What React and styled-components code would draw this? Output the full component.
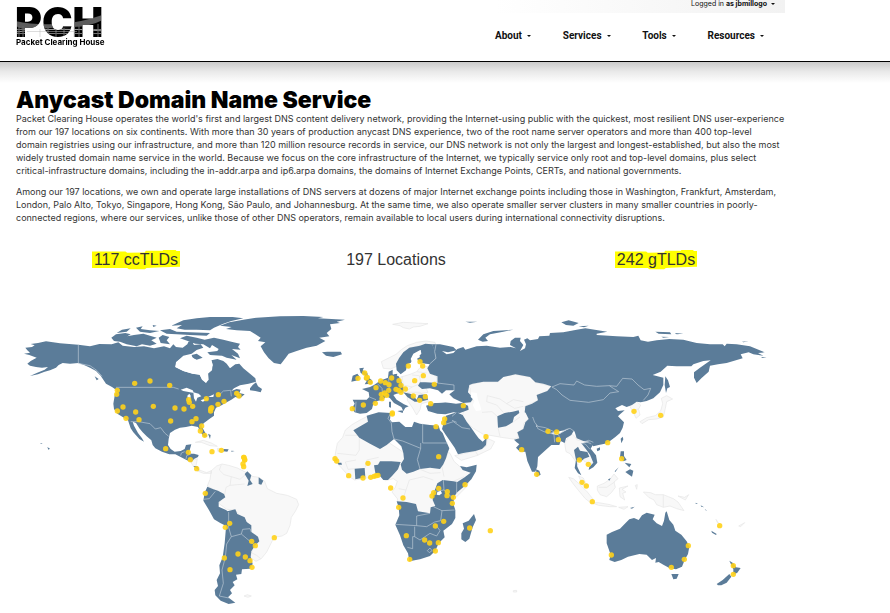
import React from "react";
import styled, { createGlobalStyle } from "styled-components";

const GlobalStyle = createGlobalStyle`
  * { box-sizing: border-box; }
  body {
    margin: 0;
    background: #fff;
    color: #333;
    font-family: "Liberation Sans", Arial, sans-serif;
    overflow-x: hidden;
  }
`;

const Header = styled.header`
  border-bottom: 1px solid #000;
`;

const HeaderInner = styled.div`
  display: flex;
  justify-content: space-between;
  max-width: 785px;
  height: 61px;
  padding-left: 15px;
`;

const LogoLink = styled.a`
  display: block;
  svg { display: block; background: #fff; isolation: isolate; }
`;

const Etching = styled.g`
  mix-blend-mode: lighten;
`;

const HeaderSide = styled.div`
  display: flex;
  flex-direction: column;
  width: 290px;
`;

const AccountBar = styled.div`
  display: flex;
  justify-content: flex-end;
  height: 13px;
  padding-right: 10px;
  background: linear-gradient(to right, #fff, #f2f2f2);
`;

const MenuButton = styled.button`
  display: flex;
  align-items: center;
  gap: ${(p) => (p.$small ? 4 : 5)}px;
  height: ${(p) => (p.$small ? 8 : 16)}px;
  padding: 0;
  border: 0;
  background: none;
  color: #111;
  font-family: ${(p) => (p.$small ? "Inter" : "Roboto")}, "Liberation Sans", sans-serif;
  font-size: ${(p) => (p.$small ? 7 : 10)}px;
  line-height: ${(p) => (p.$small ? 8 : 16)}px;
  font-weight: ${(p) => (p.$small ? 400 : 700)};
  white-space: nowrap;
  cursor: pointer;
`;

const Caret = styled.span`
  border: 2px solid transparent;
  border-top-color: #111;
  border-bottom: 0;
`;

const Nav = styled.nav`
  display: flex;
  justify-content: space-between;
  padding: 15px 21px 0 0;
`;

const Shade = styled.div`
  height: 21px;
  background: linear-gradient(#cacaca, #e9e9e9 45%, #fff);
`;

const Main = styled.main`
  max-width: 786px;
  padding: 6px 0 0 6px;
`;

const Copy = styled.section`
  padding-left: 10px;
`;

const Title = styled.h1`
  margin: 0;
  color: #000;
  font-family: Inter, "Liberation Sans", sans-serif;
  font-size: 23px;
  font-weight: 900;
  line-height: 23px;
`;

const Paragraph = styled.p`
  margin: 0 0 8px;
  font-family: Inter, "Liberation Sans", sans-serif;
  font-size: 9px;
  line-height: 13px;
`;

const Line = styled.span`
  display: block;
`;

const Stats = styled.section`
  display: grid;
  grid-template-columns: repeat(3, 1fr);
  padding-top: 18px;
`;

const Stat = styled.div`
  display: flex;
  justify-content: center;
  font-size: 16px;
  line-height: 20px;
`;

const Marked = styled.mark`
  padding: 0 2px;
  color: #333;
  background: ${(p) => (p.$on ? "#ff0" : "none")};
  clip-path: ${(p) =>
    p.$on
      ? "polygon(0 8%, 38% 8%, 40% 14%, 60% 12%, 61% 4%, 80% 4%, 81% 0, 95% 0, 96% 5%, 100% 5%, 100% 84%, 80% 86%, 62% 90%, 60% 96%, 42% 96%, 40% 90%, 0 90%)"
      : "none"};
`;

const MapFigure = styled.figure`
  margin: 0;
  padding-top: 35px;
  svg { display: block; width: 100%; height: auto; }
`;

const zones = [
  {
    x: 0, y: 0,
    pale: "M556,412 L580,406 604,414 622,424 600,422 574,412Z M622,430 L640,432 640,440 624,440Z",
    land:
      "M42,146 L60,143 52,136 46,128 66,126 74,121 62,117 84,114 108,109 150,115 205,119 240,124 268,117 305,118 325,112 338,122 372,126 402,124 432,130 462,124 480,130 490,118 498,126 518,128 532,118 540,100 552,120 572,118 580,128 560,135 545,146 520,152 498,172 496,186 520,198 548,206 568,208 576,224 588,234 594,222 592,208 606,196 608,178 604,166 622,162 640,168 650,176 660,190 676,178 688,176 700,190 720,206 736,220 738,230 716,236 690,241 672,250 664,258 680,252 692,254 688,264 704,268 690,280 676,276 664,284 646,294 632,302 618,308 612,322 612,332 598,342 582,354 574,362 584,380 592,394 582,396 572,382 564,366 545,362 528,366 510,368 495,374 480,384 476,402 474,420 482,432 494,440 512,438 524,432 528,420 544,418 540,432 536,446 552,446 566,450 564,456 552,462 544,472 528,464 512,456 496,448 478,448 456,440 436,430 428,420 424,406 410,394 398,382 388,370 378,354 368,350 372,362 384,384 396,400 402,410 388,402 370,382 362,370 354,346 338,336 322,326 312,312 310,296 314,272 320,256 306,246 288,236 272,212 258,198 240,188 222,180 205,174 180,176 158,174 146,180 138,188 120,196 104,200 84,208 60,213 80,204 104,194 114,186 96,188 78,186 60,182 52,176 62,168 80,158 58,150Z" +
      "M304,98 L318,88 346,84 362,88 352,94 372,90 400,86 420,92 440,98 424,106 440,116 420,122 396,118 380,124 350,118 330,110 312,108Z M320,84 L336,74 362,70 350,80Z M378,68 L398,64 392,72 420,76 448,78 420,84 390,80Z M428,60 L440,62 430,66Z M450,76 L480,72 500,80 540,82 600,84 590,92 540,90 500,88 470,86Z M446,98 L458,90 478,96 470,106 480,118 452,114Z" +
      "M484,62 L520,46 560,40 600,36 668,36 700,40 664,48 640,56 612,68 600,76 560,74 524,74 500,70 516,60Z M510,100 L530,92 560,98 584,104 612,98 640,104 664,110 690,116 684,126 692,134 666,132 684,146 690,160 664,150 680,164 650,158 636,152 600,150 592,142 622,138 626,132 606,120 600,130 580,118 556,116 540,110Z M545,150 L560,146 578,158 560,164 548,160Z" +
      "M720,250 L728,240 738,232 744,244 756,252 752,262 736,258 720,256Z M630,114 L632,102 M630,62 L658,52 700,44 740,38 810,34 880,33 940,36 924,40 1005,44 980,50 990,54 960,58 964,72 950,84 958,94 928,98 946,108 920,122 890,128 860,138 836,146 826,160 812,178 792,174 776,160 762,142 752,124 766,112 744,108 752,98 736,88 720,78 680,76 648,72 665,66Z M936,142 L952,140 992,140 996,148 970,156 948,152Z" +
      "M92,414 L98,417 92,417Z M112,426 L120,431 115,434Z M254,214 L266,222 260,226Z M640,432 L656,433 652,440 640,439Z M664,437 L674,438 664,440Z M594,386 L602,390 600,402Z",
    lines: "M205,119V175L240,182 260,196 276,214 M318,247H490L506,252 M362,350H386L420,356 436,372 452,368 464,384 476,394 M512,452 L514,444 524,440 M528,462 L530,452 544,446 M626,272 L640,258 662,256 664,274",
    water: "M500,170 L520,156 540,152 560,166 580,166 604,166 608,182 594,202 596,224 588,233 576,222 570,210 548,206 520,198 496,186Z M512,254 L530,248 548,256 552,264 540,262 520,258Z M538,266 L542,272 540,290 534,286 532,272Z M550,262 L566,266 574,274 562,278 558,290 552,280Z M572,286 L592,278 594,284 578,290Z M594,276 L612,268 610,276Z",
    dots: [[374,235],[420,228],[479,241],[322,256],[320,268],[339,306],[322,318],[348,340],[387,344],[377,321],[430,304],[495,309],[522,312],[548,304],[536,284],[538,292],[482,348],[589,281],[625,269],[680,265],[687,273],[642,289],[624,298],[605,308],[602,311],[602,318],[558,341],[546,350],[575,363],[571,378],[584,391],[467,431],[535,442],[541,464],[606,440],[634,436],[701,457],[704,464]],
  },
  {
    x: 420, y: 405,
    pale: "M184,92 L200,78 216,72 236,76 262,84 286,96 300,108 326,112 344,124 352,146 380,160 412,166 440,178 446,194 436,214 424,232 420,256 410,280 396,288 372,292 362,312 350,336 334,356 318,364 300,352 306,334 312,318 300,270 280,240 256,210 230,208 206,190 220,170 204,156 190,148 172,138 180,118Z M120,64 L142,56 138,78 148,90 170,98 184,92 184,100 160,100 140,92Z M282,468 L292,464 304,468 294,472Z",
    paleLines: "M214,74 L208,90 222,104 244,110 240,136 228,142 224,164 M244,110 L270,118 286,104 M240,136 L262,134 284,132 M304,338 L320,346 332,356",
    land: "M164,158 L172,140 190,148 204,152 222,162 226,172 206,186 206,200 228,210 236,216 240,248 236,262 212,250 192,238 178,212 160,182Z M232,214 L256,208 262,222 284,232 290,246 304,256 304,276 324,290 328,304 314,318 304,334 302,350 308,372 300,386 276,388 274,402 258,404 262,418 248,426 254,436 240,450 246,460 234,472 256,488 236,492 212,482 196,466 194,450 204,438 200,420 210,400 208,376 218,352 224,310 228,262Z M284,102 L292,94 304,106 300,120 308,132 292,138 296,122Z M326,112 L340,122 334,134 326,132Z M130,78 L142,78 148,92Z",
    lines: "M236,216 L236,262 244,290 230,312 226,352 216,390 220,430 208,468 236,474 M244,290 L274,282 300,304 316,318 M274,282 L278,268 300,266 304,276 M160,178 L178,176 196,154",
    dots: [[140,86],[166,160],[282,52],[284,60],[279,72],[281,80],[239,250],[226,262],[305,304],[316,317],[373,293],[264,342],[286,351],[300,362],[306,382],[223,354],[240,389]],
  },
  {
    x: 930, y: 0,
    pale: "M218,58 L250,52 290,54 324,56 300,64 280,66 268,72 250,68 240,62Z M184,170 L208,158 228,148 244,134 262,122 290,112 318,108 345,112 348,120 300,122 270,128 250,144 236,162 230,184 212,192 190,190Z M236,218 L270,208 290,200 300,188 322,184 330,206 350,214 354,228 334,234 310,232 324,262 276,270 240,250Z M262,262 L300,262 320,280 326,290 304,296 300,314 290,330 276,306 262,286Z M404,452 L466,438 498,424 502,400 524,410 512,432 470,452 424,466Z",
    paleLines: "M246,214 L250,240 276,246 296,238 M276,210 L298,212 302,232 M290,200 L320,204 M276,246 L262,256 M466,438 L474,452",
    land: "M230,196 L228,176 238,158 250,142 268,128 300,122 302,134 280,146 272,162 276,172 262,178 258,196 242,208Z M300,122 L316,116 336,118 346,140 348,160 330,178 300,174 290,160 304,146Z M118,190 L132,188 128,196 142,204 144,216 156,226 156,236 134,238 140,228 132,222 136,212 122,204Z M98,212 L112,206 118,214 114,226 94,230Z" +
      "M98,284 L140,284 148,276 146,262 126,252 150,246 162,240 176,230 188,224 204,218 206,200 218,194 218,208 236,214 244,230 250,246 250,262 230,266 220,270 230,284 252,298 266,304 256,308 250,318 244,306 222,294 210,280 200,274 188,284 172,288 160,296 156,312 140,324 120,326 104,322 96,310 104,296Z M232,318 L250,316 248,324Z M207,290 L213,290 213,308 207,306Z M222,208 L232,206 230,214 222,212Z M250,262 L276,268 290,284 296,270 320,268 324,284 300,290 284,290 262,276Z" +
      "M318,302 L344,294 376,292 408,296 426,294 444,302 446,314 420,324 400,322 376,328 352,326 324,318Z M378,332 L410,322 428,330 440,350 452,366 466,386 476,400 488,410 500,398 498,420 486,432 466,438 430,444 414,448 404,428 390,408 376,388 366,372 372,350Z" +
      "M100,376 L144,350 140,332 176,322 212,324 210,344 216,352 238,350 256,366 276,366 282,350 300,356 330,360 356,362 360,376 368,384 378,408 388,430 382,446 378,460 370,478 360,492 330,488 300,492 280,500 260,506 246,494 242,478 252,462 250,444 244,424 222,402 200,420 180,432 150,416 118,398Z",
    lines: "M212,324 L204,340 214,354 216,380 222,402 M308,356V414H382 M302,430 L248,408 222,402 M302,414V430L292,464 300,492 M148,276 L168,284 M108,290 L106,320 M172,236 L186,250 188,270 M206,218 L208,256 M376,358 L400,350 426,368 450,372 M396,334 L408,324 M410,352 L396,346",
    water: "M276,166 L296,146 300,156 290,162 292,172 318,178 296,184 286,198 266,204 262,194 270,180Z M328,276 L340,268 356,276 384,282 408,292 376,292 344,294 330,290Z",
    dots: [[114,220],[134,204],[142,217],[139,219],[151,232],[168,248],[182,228],[196,233],[207,239],[215,219],[237,227],[243,241],[256,252],[228,253],[236,256],[243,262],[206,256],[194,264],[200,271],[184,268],[186,281],[166,295],[130,300],[97,311],[217,324],[217,327],[280,273],[299,286],[316,275],[332,296],[284,227],[310,212],[343,238],[300,170],[308,183],[265,183],[430,302],[374,342],[371,353],[348,365],[498,395]],
  },
  {
    x: 930, y: 375,
    pale: "M144,-42 L120,-30 96,-16 76,0 68,22 52,40 48,60 44,84 52,100 70,120 88,140 104,150 128,146 160,140 180,138 196,152 220,146 232,154 226,172 216,186 232,206 234,222 240,240 300,260 400,240 400,210 440,170 462,120 422,112 402,94 390,70 376,60 280,90 240,60 180,20Z",
    paleLines: "M76,16H118V60L108,76 52,70 M118,20 L180,56 M104,116 L84,118 76,96 108,90 M136,112 L140,90 176,82 M250,204 L258,180 236,176 M258,180 L268,150 310,140 340,150 M300,118 L330,130 362,128 M384,70 L366,110 372,140 M400,154 L432,140",
    land: "M104,116 L134,114 136,142 106,148Z M162,106 L174,104 180,94 214,94 242,96 234,118 216,138 204,150 190,150 178,136 168,140Z M52,98 L64,98 66,104 56,104Z M420,108 L440,112 470,104 468,124 454,148 434,168 410,188 402,202 400,222 406,240 406,264 396,282 370,302 374,322 356,340 346,362 330,378 300,388 268,394 264,370 250,346 240,316 226,284 238,256 236,232 230,214 260,216 288,222 294,244 330,250 332,232 346,228 338,210 340,190 346,176 352,160 368,150 400,154 412,156 434,142 452,128 428,120Z M462,252 L468,270 458,292 448,326 436,336 424,328 424,310 432,296 428,280 446,272Z",
    lines: "M226,283 L290,287 320,290 M284,290V320H278V356L262,352 M290,287V258L330,250 M320,290 L344,276 362,272 366,242 404,240 M284,320 L300,330 330,310 350,318 360,302 344,280 M366,242 L340,230 M370,150 L372,180 400,206 M410,156V190 M322,362 L330,354 336,362 328,368Z M372,180 L344,184",
    water: "M352,186 L362,182 366,190 358,196 350,194Z",
    dots: [[45,86],[50,93],[144,100],[86,137],[129,144],[152,142],[162,139],[168,137],[174,136],[212,174],[249,204],[236,232],[356,80],[356,175],[341,188],[336,198],[382,185],[381,197],[400,202],[397,220],[435,164],[371,274],[346,288],[449,294],[511,302],[259,317],[314,330],[329,339],[355,338],[346,363],[269,388]],
  },
  {
    x: 1380, y: 0,
    pale: "M-6,240 L40,230 84,230 100,214 136,208 180,216 196,232 244,244 230,260 200,270 204,286 164,304 168,320 176,340 162,354 160,372 142,382 146,398 130,402 100,398 66,392 40,388 10,370 -10,352 -22,334 -20,316 -30,300 0,290 12,284 0,268 0,250Z M284,414 L304,384 316,396 320,404 340,408 356,424 368,440 376,460 366,476 344,470 330,450 320,456 324,480 312,462 300,446 288,440Z M510,350 L530,338 556,332 572,318 578,296 574,280 590,272 608,282 590,290 586,310 580,336 560,342 536,344 516,356Z M478,302 L500,290 512,300 506,312 510,330 498,340 490,322Z",
    paleLines: "M50,290 L52,272 90,282 110,296 134,310 160,304 M50,290 L80,300 100,322 M110,296 L130,284 160,290 M82,334 L66,320 36,322 M84,368 L90,394 M128,352 L150,336 M488,316 L506,312",
    land: "M-114,118 L-90,118 -50,126 -40,136 -66,142 -84,138 -70,148 -50,144 -38,132 -20,126 -14,134 20,124 50,122 90,128 122,126 138,130 120,120 122,108 135,98 152,98 150,108 160,120 150,138 165,130 168,118 162,104 172,100 180,106 204,102 208,94 238,92 240,84 280,82 320,74 346,70 412,80 380,86 380,90 440,94 490,96 505,92 512,106 534,110 560,106 598,102 640,104 680,114 720,118 758,118 764,124 770,116 800,118 840,124 884,142 864,144 880,152 850,148 836,142 812,148 818,160 770,174 744,178 720,182 716,200 694,220 680,234 672,218 672,202 690,188 722,166 700,168 670,178 664,184 620,184 592,182 572,200 548,210 580,218 580,240 570,262 550,280 530,288 512,292 500,290 486,300 470,306 456,300 436,310 444,318 464,316 450,328 444,334 462,352 458,368 450,384 436,396 420,408 404,416 386,420 370,424 358,410 340,408 320,400 314,380 300,370 284,376 240,384 206,370 192,352 188,336 164,322 166,304 186,296 204,286 200,270 232,258 244,244 220,236 196,232 180,216 136,208 100,216 84,230 40,230 8,236 -2,240 -6,262 10,280 2,292 -20,294 -50,280 -62,268 -46,256 -72,256 -84,266 -96,256 -120,250 -144,252 -156,242 -150,232 -134,232 -98,234 -98,214 -120,206 -128,190 -120,176 -102,160 -106,140Z" +
      "M166,322 L188,336 200,366 250,388 262,390 280,380 300,370 312,376 304,390 288,400 284,414 272,408 268,420 244,420 228,434 204,456 202,484 196,500 186,500 172,468 166,440 150,440 138,428 148,418 140,412 132,404 148,400 142,382 160,372 166,352 176,342Z M82,334 L104,324 128,320 146,316 148,324 132,336 128,352 108,364 84,368Z" +
      "M586,214 L594,226 600,246 592,250 588,264 584,240Z M24,104 L40,88 70,78 130,74 100,80 60,88 46,98 54,108 38,110Z M274,52 L296,46 326,54 310,62 288,60Z M326,64 L356,62 342,67Z M556,80 L600,82 604,88 566,86Z M614,84 L640,86 620,88Z M574,95 L598,96 580,98Z M816,110 L836,109 820,112Z M874,156 L890,158 876,159Z M-14,50 L22,50 0,53Z",
    lines: "M246,246 L270,236 312,240 320,228 344,240 380,244 418,242 430,250 446,260 420,264 400,284 356,292 300,286 276,270 260,254Z M418,242 L440,244 458,220 486,222 504,240 522,254 542,250 534,270 520,286 M188,336 L194,352 204,364 226,368 252,380 252,388 222,380 202,370 M252,384 L270,386 286,374 300,370 314,380 M252,390 L254,412 M266,390 L272,408 M-102,118 L-106,140 -102,160 -120,176 M-98,214 L-98,234 -48,240 -48,256 M344,410 L356,406 370,412",
    water: "M4,262 L20,264 24,284 30,300 34,316 18,318 8,300 14,288 2,276Z",
    dots: [[234,379],[260,381],[265,404],[155,434],[413,413],[492,319],[572,331],[455,461],[328,465],[355,478]],
  },
  {
    x: 1470, y: 285,
    pale: "M206,232 L220,236 240,254 262,276 278,296 274,310 256,296 236,272 220,252Z M274,308 L296,308 330,314 350,320 330,320 296,316Z M356,322 L384,320 372,328Z M292,258 L312,250 330,238 342,222 354,236 342,246 346,262 334,278 320,290 300,284 292,270Z M236,228 L250,234 258,252 262,262 248,256Z M358,264 L384,258 366,268 378,276 368,280 374,300 360,290Z M430,276 L452,278 466,284 490,284 520,296 534,306 552,332 530,326 510,318 490,322 470,314 462,300 446,292Z M534,288 L554,292 566,284 556,300Z M716,378 L734,368 722,380Z M648,358 L656,370 652,368Z M406,256 L412,254 410,268Z M40,572 L50,571 50,576 40,576Z",
    paleLines: "M490,284V322 M296,262 L320,262 344,246",
    land: "M108,208 L118,212 122,224 110,230Z M222,150 L234,140 240,152 262,156 268,170 252,176 244,184 230,180 232,200 244,226 234,220 224,204 228,180Z M244,130 L268,126 280,132 272,146 288,166 292,188 280,202 266,210 268,200 280,188 270,164 258,148Z M290,146 L300,142 300,150 292,154Z M362,116 L368,110 370,118 364,130Z M362,154 L372,154 372,168 380,180 370,184 360,172Z M374,188 L394,192 388,202Z M376,216 L390,208 400,212 396,230 384,222Z M344,214 L356,202 346,216Z M390,324 L404,320 396,326Z M324,238 L332,235 328,242Z M586,308 L594,312 588,312Z M602,316 L612,322 604,320Z M614,326 L622,334 616,330Z M634,392 L650,402 648,405 636,398Z" +
      "M320,404 L336,396 360,386 376,370 388,358 402,354 416,360 426,346 440,338 464,344 458,358 470,370 486,378 492,362 496,338 500,334 508,360 520,374 526,392 544,404 560,424 568,440 564,462 554,480 546,500 528,508 508,504 490,494 476,486 466,488 468,474 456,480 440,464 418,462 384,470 364,480 344,486 328,480 332,464 320,430Z M514,522 L536,522 530,536 520,538Z M688,482 L700,490 708,502 722,504 712,518 700,524 700,508Z M650,552 L668,540 688,522 694,530 680,548 664,556 654,556Z",
    lines: "M244,130 L256,132 270,148 M274,132 L260,126",
    dots: [[110,223],[246,247],[259,258],[277,305],[334,465],[514,502],[553,478],[565,437],[659,377],[700,497],[700,523]],
  },
];

const place = (z) => `translate(${z.x} ${z.y})`;

function WorldMap() {
  return (
    <svg viewBox="-12 0 2340 912" role="img" aria-label="World map of anycast locations">
      {zones.map((z, i) => (
        <g key={i} transform={place(z)} strokeLinejoin="round">
          <path d={z.pale} fill="#f8f8f8" stroke="#e6e6e6" strokeWidth="2" />
          <path d={z.paleLines} fill="none" stroke="#e6e6e6" strokeWidth="2" />
        </g>
      ))}
      {zones.map((z, i) => (
        <path key={i} transform={place(z)} d={z.land} fill="#5b7c99" />
      ))}
      {zones.map((z, i) => (
        <g key={i} transform={place(z)}>
          <path d={z.lines} fill="none" stroke="#bccad6" strokeWidth="2" />
          <path d={z.water} fill="#fff" />
        </g>
      ))}
      {zones.map((z, i) => (
        <g key={i} transform={place(z)} fill="#ffd11a" fillOpacity="0.9">
          {z.dots.map(([x, y]) => (
            <circle key={`${x}-${y}`} cx={x} cy={y} r="8" />
          ))}
        </g>
      ))}
    </svg>
  );
}

function Logo() {
  return (
    <svg width="92" height="50" viewBox="0 0 92 50" role="img" aria-label="PCH Packet Clearing House">
      <rect width="92" height="50" fill="#fff" />
      <text x="0" y="37" fontFamily="Inter" fontWeight="900" fontSize="41">PCH</text>
      <Etching>
        <path d="M0,21 Q20,25 38,24 T66,21 T90,14 V19 Q74,27 58,27 T24,29 T0,25Z" fill="#5c5c5c" />
        <path d="M0,29.5 H90 M0,33.5 H90" stroke="#777" />
        <path d="M0,32 Q40,27 90,31" fill="none" stroke="#999" />
        <path d="M4,26 V37 M8,26 V37 M33,28 V37 M41,28 V37 M49,28 V37 M64,26 V37 M83,24 V37" stroke="#666" />
      </Etching>
      <path d="M12,31.5 H62 M25,29 V37 M59,27 V37" stroke="#bbb" strokeOpacity="0.5" />
      <text x="1" y="45" fontFamily="Inter" fontWeight="700" fontSize="8">Packet Clearing House</text>
    </svg>
  );
}

const menus = ["About", "Services", "Tools", "Resources"];

const paragraphs = [
  [
    "Packet Clearing House operates the world's first and largest DNS content delivery network, providing the Internet-using public with the quickest, most resilient DNS user-experience",
    "from our 197 locations on six continents. With more than 30 years of production anycast DNS experience, two of the root name server operators and more than 400 top-level",
    "domain registries using our infrastructure, and more than 120 million resource records in service, our DNS network is not only the largest and longest-established, but also the most",
    "widely trusted domain name service in the world. Because we focus on the core infrastructure of the Internet, we typically service only root and top-level domains, plus select",
    "critical-infrastructure domains, including the in-addr.arpa and ip6.arpa domains, the domains of Internet Exchange Points, CERTs, and national governments.",
  ],
  [
    "Among our 197 locations, we own and operate large installations of DNS servers at dozens of major Internet exchange points including those in Washington, Frankfurt, Amsterdam,",
    "London, Palo Alto, Tokyo, Singapore, Hong Kong, São Paulo, and Johannesburg. At the same time, we also operate smaller server clusters in many smaller countries in poorly-",
    "connected regions, where our services, unlike those of other DNS operators, remain available to local users during international connectivity disruptions.",
  ],
];

const stats = [
  { label: "117 ccTLDs", marked: true },
  { label: "197 Locations", marked: false },
  { label: "242 gTLDs", marked: true },
];

export default function App() {
  return (
    <>
      <GlobalStyle />
      <Header>
        <HeaderInner>
          <LogoLink href="#home"><Logo /></LogoLink>
          <HeaderSide>
            <AccountBar>
              <MenuButton $small>
                <span>Logged in <b>as jbmillogo</b></span>
                <Caret />
              </MenuButton>
            </AccountBar>
            <Nav>
              {menus.map((m) => (
                <MenuButton key={m}>{m}<Caret /></MenuButton>
              ))}
            </Nav>
          </HeaderSide>
        </HeaderInner>
      </Header>
      <Shade />
      <Main>
        <Copy>
          <Title>Anycast Domain Name Service</Title>
          {paragraphs.map((lines, i) => (
            <Paragraph key={i}>
              {lines.map((l) => <Line key={l}>{l} </Line>)}
            </Paragraph>
          ))}
        </Copy>
        <Stats>
          {stats.map((s) => (
            <Stat key={s.label}><Marked $on={s.marked}>{s.label}</Marked></Stat>
          ))}
        </Stats>
        <MapFigure><WorldMap /></MapFigure>
      </Main>
    </>
  );
}
